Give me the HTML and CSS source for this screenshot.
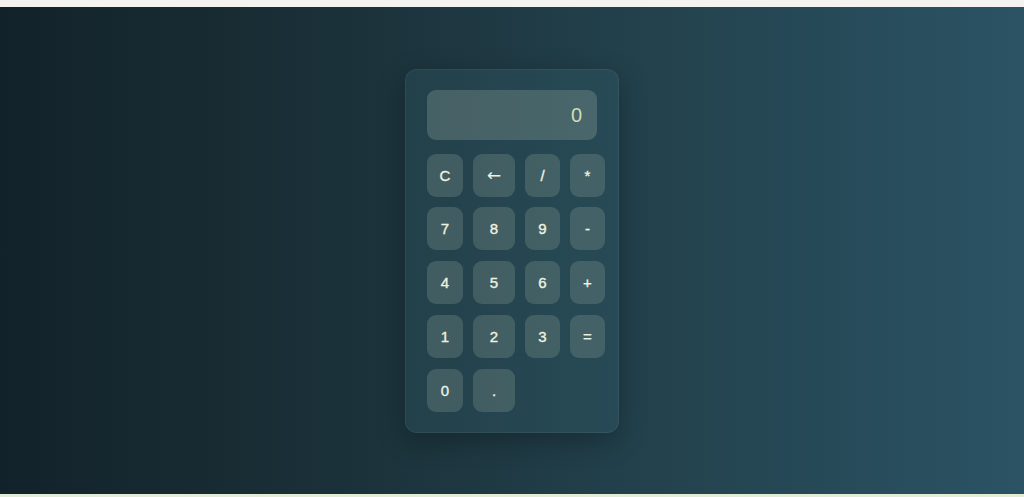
FILE: index.html
```html
<!DOCTYPE html>
<html>
<head>
<meta charset="utf-8">
<link rel="stylesheet" href="styles.css">
</head>
<body>
<div class="top-strip"></div>
<main class="stage">
  <div class="calc">
    <div class="display">0</div>
    <div class="keys">
      <button class="key">C</button>
      <button class="key"><span class="arrow">←</span></button>
      <button class="key">/</button>
      <button class="key">*</button>
      <button class="key">7</button>
      <button class="key">8</button>
      <button class="key">9</button>
      <button class="key">-</button>
      <button class="key">4</button>
      <button class="key">5</button>
      <button class="key">6</button>
      <button class="key">+</button>
      <button class="key">1</button>
      <button class="key">2</button>
      <button class="key">3</button>
      <button class="key">=</button>
      <button class="key">0</button>
      <button class="key">.</button>
    </div>
  </div>
</main>
<div class="bottom-strip"></div>
</body>
</html>
```
FILE: styles.css
```css
html, body {
  margin: 0;
  padding: 0;
  overflow: hidden;
}
body {
  font-family: "Liberation Sans", Arial, sans-serif;
  background: #e3ecd4;
}
.top-strip {
  height: 7px;
  background: #f4f3ef;
}
.bottom-strip {
  height: 3px;
  background: #e3ecd4;
}
.stage {
  height: 487px;
  display: flex;
  align-items: center;
  justify-content: center;
  background: linear-gradient(90deg, #12222a 0%, #1a2f37 30%, #22404b 60%, #2b5364 100%);
}
.calc {
  width: 170px;
  padding: 20px 21px;
  border-radius: 12px;
  background: rgba(80, 145, 165, 0.13);
  border: 1px solid rgba(255, 255, 255, 0.06);
  box-shadow: 0 8px 28px rgba(0, 0, 0, 0.28);
}
.display {
  height: 50px;
  border-radius: 9px;
  background: rgba(130, 150, 145, 0.38);
  color: #d0ddb6;
  font-size: 20px;
  line-height: 50px;
  text-align: right;
  padding-right: 15px;
  box-sizing: border-box;
  margin-bottom: 14px;
}
.keys {
  display: grid;
  grid-template-columns: 36px 42px 35px 35px;
  grid-auto-rows: 43px;
  column-gap: 10px;
  row-gap: 10.75px;
}
.key {
  border: none;
  border-radius: 9px;
  background: rgba(120, 140, 135, 0.36);
  color: #eef2e0;
  font-family: "Liberation Sans", Arial, sans-serif;
  font-size: 15px;
  font-weight: 400;
  -webkit-text-stroke: 0.35px currentColor;
  padding: 0;
}
.arrow {
  font-family: "DejaVu Sans", sans-serif;
  font-size: 17px;
  -webkit-text-stroke: 0;
}
```
